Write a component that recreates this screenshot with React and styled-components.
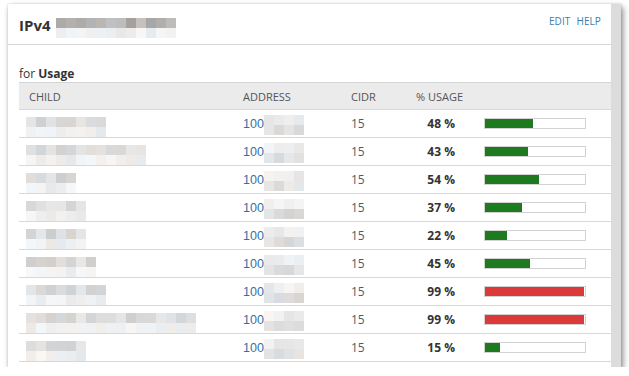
import React from "react";
import styled, { createGlobalStyle } from "styled-components";

const GlobalStyle = createGlobalStyle`
  html, body { margin: 0; padding: 0; background: #ffffff; }
  body { font-family: "Open Sans", "DejaVu Sans", sans-serif; color: #333; }
`;

const Card = styled.div`
  margin: 4px 0 0 8px;
  width: 613px;
  height: 363px;
  display: flex;
  background: #fff;
  box-shadow: 2px 3px 6px rgba(0, 0, 0, 0.45), 0 0 2px rgba(0, 0, 0, 0.15);
  overflow: hidden;
`;

const Main = styled.div`
  flex: 1;
  display: flex;
  flex-direction: column;
  min-width: 0;
`;

const Gutter = styled.div`
  width: 10px;
  background: #dcdcdc;
`;

const Header = styled.div`
  height: 40px;
  border-bottom: 1px solid #d6d6d6;
  display: flex;
  justify-content: space-between;
  padding: 0 10px 0 11px;
`;

const Title = styled.div`
  display: flex;
  align-items: center;
  gap: 5px;
  font-size: 15px;
  font-weight: 700;
  color: #333;
  margin-top: 1px;
`;

const Links = styled.div`
  display: flex;
  gap: 6px;
  padding-top: 10px;
  font-size: 10px;
  letter-spacing: 0.1px;
  color: #3a7ea8;
`;

const Body = styled.div`
  padding: 20px 0 0 11px;
`;

const ForLine = styled.div`
  font-size: 12px;
  line-height: 17px;
  color: #333;
  b { font-weight: 700; }
`;

const Row = styled.div`
  display: grid;
  grid-template-columns: 214px 108px 65px 60px 1fr;
  align-items: center;
  height: ${(p) => (p.$head ? 26 : 27)}px;
  border-bottom: 1px solid #d8d8d8;
  background: ${(p) => (p.$head ? "#ebebec" : "#fff")};
  border-top: ${(p) => (p.$head ? "1px solid #d4d4d4" : "none")};
`;

const HeadCell = styled.div`
  font-size: 11px;
  color: #555;
  padding-left: 10px;
  text-transform: uppercase;
`;

const Cell = styled.div`
  display: flex;
  align-items: center;
  height: 100%;
  padding-left: ${(p) => p.$pl ?? 10}px;
  justify-content: ${(p) => (p.$right ? "flex-end" : "flex-start")};
  padding-right: ${(p) => (p.$right ? 11 : 0)}px;
`;

const Addr = styled.span`
  font-family: "Liberation Sans", Arial, sans-serif;
  font-size: 12.5px;
  color: #3470a6;
`;

const Cidr = styled.span`
  font-size: 12px;
  color: #4d5b68;
`;

const Pct = styled.span`
  font-size: 12px;
  font-weight: 700;
  color: #333;
`;

const Bar = styled.div`
  width: 102px;
  height: 11px;
  box-sizing: border-box;
  border: 1px solid #d2d2d2;
  background: #fff;
  display: flex;
`;

const Fill = styled.div`
  height: 100%;
  background: ${(p) => (p.$high ? "#dc3a3a" : "#1e7a1e")};
`;

const MosaicWrap = styled.div`
  display: flex;
  flex-direction: column;
  margin-top: ${(p) => p.$mt || 0}px;
`;

const MosaicRow = styled.div`
  display: flex;
`;

const Tile = styled.div`
  width: 10px;
  height: 10px;
`;

function rand(seed) {
  let s = seed * 9301 + 49297;
  return () => {
    s = (s * 9301 + 49297) % 233280;
    return s / 233280;
  };
}

function Mosaic({ cols, rows, seed, mt }) {
  const r = rand(seed);
  return (
    <MosaicWrap $mt={mt}>
      {rows.map(([lo, hi], ri) => (
        <MosaicRow key={ri}>
          {Array.from({ length: cols }).map((_, ci) => {
            const v = Math.round(lo + (hi - lo) * r());
            const tint = Math.round((r() - 0.5) * 8);
            return (
              <Tile
                key={ci}
                style={{ background: `rgb(${v + tint},${v},${v - tint})` }}
              />
            );
          })}
        </MosaicRow>
      ))}
    </MosaicWrap>
  );
}

const data = [
  { pct: 48, cols: 8 },
  { pct: 43, cols: 12 },
  { pct: 54, cols: 5 },
  { pct: 37, cols: 6 },
  { pct: 22, cols: 6 },
  { pct: 45, cols: 7 },
  { pct: 99, cols: 8 },
  { pct: 99, cols: 17 },
  { pct: 15, cols: 6 },
];

const ChildCell = styled.div`
  height: 100%;
  display: flex;
  align-items: flex-start;
  padding-left: 7px;
`;

export default function App() {
  return (
    <>
      <GlobalStyle />
      <Card>
        <Main>
          <Header>
            <Title>
              IPv4
              <Mosaic
                cols={12}
                seed={3}
                rows={[
                  [160, 205],
                  [232, 248],
                ]}
                mt={7}
              />
            </Title>
            <Links>
              <span>EDIT</span>
              <span>HELP</span>
            </Links>
          </Header>
          <Body>
            <ForLine>
              for <b>Usage</b>
            </ForLine>
            <Row $head>
              <HeadCell>Child</HeadCell>
              <HeadCell>Address</HeadCell>
              <HeadCell>CIDR</HeadCell>
              <HeadCell>% Usage</HeadCell>
              <div />
            </Row>
            {data.map((d, i) => (
              <Row key={i}>
                <ChildCell>
                  <Mosaic
                    cols={d.cols}
                    seed={i + 11}
                    rows={[
                      [205, 232],
                      [232, 248],
                    ]}
                    mt={7}
                  />
                </ChildCell>
                <Cell>
                  <Addr>100</Addr>
                  <Mosaic
                    cols={4}
                    seed={i + 40}
                    rows={[
                      [228, 245],
                      [210, 235],
                    ]}
                    mt={2}
                  />
                </Cell>
                <Cell>
                  <Cidr>15</Cidr>
                </Cell>
                <Cell $right>
                  <Pct>{d.pct} %</Pct>
                </Cell>
                <Cell $pl={18}>
                  <Bar>
                    <Fill $high={d.pct >= 90} style={{ width: `${d.pct}%` }} />
                  </Bar>
                </Cell>
              </Row>
            ))}
          </Body>
        </Main>
        <Gutter />
      </Card>
    </>
  );
}
